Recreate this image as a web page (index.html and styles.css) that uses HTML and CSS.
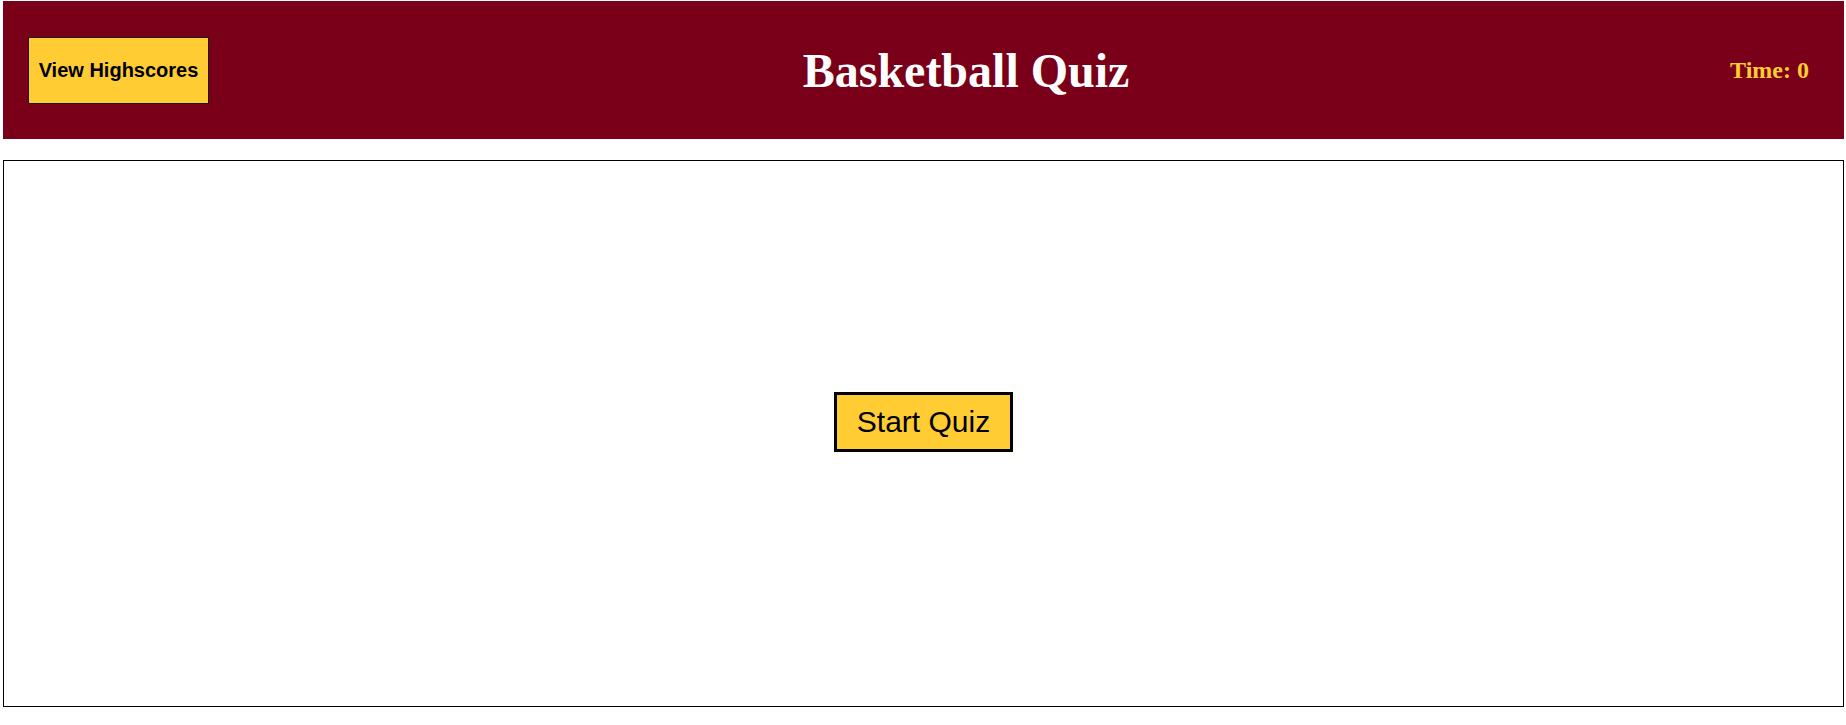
FILE: index.html
```html
<!DOCTYPE html>
<html lang="en">
<head>
<meta charset="utf-8">
<title>Basketball Quiz</title>
<link rel="stylesheet" href="styles.css">
</head>
<body>
<header class="top-bar">
  <button class="highscores-btn" type="button">View Highscores</button>
  <h1 class="title">Basketball Quiz</h1>
  <div class="timer">Time: <span>0</span></div>
</header>
<main class="quiz-box">
  <button class="start-btn" type="button">Start Quiz</button>
</main>
</body>
</html>
```
FILE: styles.css
```css
html, body {
  margin: 0;
  padding: 0;
  background: #ffffff;
}
body {
  padding: 1px 2px 0 3px;
  font-family: "Liberation Serif", "Times New Roman", serif;
}
.top-bar {
  height: 138px;
  background: #7a001a;
  display: flex;
  align-items: center;
  justify-content: space-between;
  padding: 0 35px 0 25px;
  box-sizing: border-box;
}
.highscores-btn {
  width: 181px;
  height: 67px;
  margin-top: 1px;
  background: #ffcc33;
  border: 1px solid #1a1a1a;
  font-family: "Liberation Sans", Arial, sans-serif;
  font-weight: bold;
  font-size: 20px;
  color: #000;
  padding: 0;
}
.title {
  margin: 0 7px 0 0;
  color: #ffffff;
  font-size: 48px;
  font-weight: bold;
  font-family: "Liberation Serif", "Times New Roman", serif;
}
.timer {
  color: #ffcc33;
  font-size: 24px;
  font-weight: bold;
}
.quiz-box {
  margin-top: 21px;
  height: 547px;
  box-sizing: border-box;
  border: 1px solid #000;
  display: flex;
  justify-content: center;
  align-items: flex-start;
  padding-top: 231px;
}
.start-btn {
  background: #ffcc33;
  border: 3px solid #000;
  font-family: "Liberation Sans", Arial, sans-serif;
  font-size: 30px;
  color: #000;
  width: 179px;
  height: 60px;
  padding: 0;
}
```
